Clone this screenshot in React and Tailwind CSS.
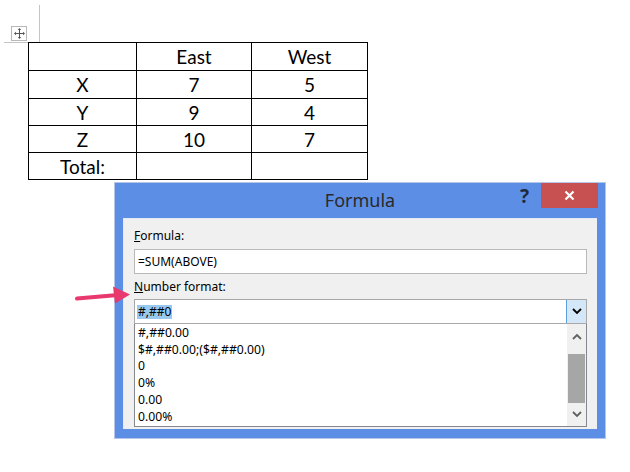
import React from "react";

// Word table + Formula dialog
const rows = [
  ["", "East", "West"],
  ["X", "7", "5"],
  ["Y", "9", "4"],
  ["Z", "10", "7"],
  ["Total:", "", ""],
];
const rowHeights = ["h-[28px]", "h-[28px]", "h-[27px]", "h-[27px]", "h-[27px]"];

const formats = ["#,##0.00", "$#,##0.00;($#,##0.00)", "0", "0%", "0.00", "0.00%"];

function Chevron({ up, className }) {
  return (
    <svg width="10" height="7" viewBox="0 0 10 7" className={className}>
      <path
        d={up ? "M1 6 L5 2 L9 6" : "M1 1 L5 5 L9 1"}
        fill="none"
        stroke="currentColor"
        strokeWidth="1.8"
      />
    </svg>
  );
}

export default function App() {
  return (
    <div className="relative w-[630px] h-[472px] bg-white overflow-hidden font-['Noto_Sans',sans-serif]">
      {/* page corner marks */}
      <div className="absolute left-[39px] top-[5px] w-px h-[37px] bg-[#c4c4c4]" />
      <div className="absolute left-[4px] top-[42px] w-[24px] h-px bg-[#c4c4c4]" />
      <div className="absolute left-[11px] top-[26px] w-[16px] h-[15px] border border-[#b8b8b8] bg-white flex items-center justify-center">
        <svg width="11" height="11" viewBox="0 0 11 11" className="text-[#555]">
          <path d="M5.5 1 V10 M1 5.5 H10" stroke="currentColor" strokeWidth="1" />
          <path d="M5.5 0 L3.8 2 H7.2 Z M5.5 11 L3.8 9 H7.2 Z M0 5.5 L2 3.8 V7.2 Z M11 5.5 L9 3.8 V7.2 Z" fill="currentColor" />
        </svg>
      </div>

      {/* table */}
      <table className="ml-[28px] mt-[42px] border-collapse font-['Lato',sans-serif] text-[19px] text-black">
        <tbody>
          {rows.map((r, i) => (
            <tr key={i} className={rowHeights[i]}>
              {r.map((c, j) => (
                <td
                  key={j}
                  className={`border border-black text-center leading-none p-0 ${
                    j === 0 ? "w-[108px]" : j === 1 ? "w-[115px]" : "w-[116px]"
                  }`}
                >
                  {c}
                </td>
              ))}
            </tr>
          ))}
        </tbody>
      </table>

      {/* dialog */}
      <div className="ml-[114px] mt-[2px] w-[492px] h-[257px] border border-[#b5c6e6] bg-[#5c8ee6] flex flex-col">
        <div className="relative h-[35px] flex items-center justify-center">
          <span className="text-[18px] text-[#2a2a2a] leading-none mb-[1px]">Formula</span>
          <span className="absolute left-[405px] top-[1px] text-[19px] font-bold text-[#1f2b3d] leading-[24px]">?</span>
          <div className="absolute left-[426px] top-0 w-[57px] h-[25px] bg-[#c75050] flex items-center justify-center">
            <svg width="11" height="11" viewBox="0 0 11 11">
              <path d="M1.5 1.5 L9.5 9.5 M9.5 1.5 L1.5 9.5" stroke="white" strokeWidth="2.2" />
            </svg>
          </div>
        </div>

        <div className="mx-[8px] h-[211px] bg-[#f0f0f0] border-t border-l border-[#e4ebf6] px-[10px] pt-[9px] text-[12px] text-black">
          <div className="leading-[16px]">
            <span className="underline">F</span>ormula:
          </div>
          <div className="mt-[5px] h-[25px] bg-white border border-[#b9b9b9] px-[3px] flex items-center leading-none">
            =SUM(ABOVE)
          </div>
          <div className="mt-[5px] leading-[16px]">
            <span className="underline">N</span>umber format:
          </div>
          <div className="mt-[4px] h-[25px] bg-white border border-[#a8a8a8] flex items-center">
            <span className="ml-[2px] px-[1px] h-[14px] bg-[#99c9ef] flex items-center leading-none">#,##0</span>
            <div className="ml-auto w-[20px] h-full bg-[#d4e7f8] border-l border-[#5a9fe0] flex items-center justify-center text-black">
              <Chevron />
            </div>
          </div>
          <div className="h-[103px] bg-white border border-t-0 border-[#828790] flex">
            <div className="flex-1 pl-[3px] pt-[1px]">
              {formats.map((f) => (
                <div key={f} className="leading-[16.7px] text-[12.2px]">
                  {f}
                </div>
              ))}
            </div>
            <div className="w-[19px] bg-[#f0f0f0] flex flex-col items-center">
              <div className="h-[25px] flex items-center justify-center text-[#606060]">
                <Chevron up />
              </div>
              <div className="w-[17px] h-[49px] bg-[#a6a6a6] mt-[5px]" />
              <div className="flex-1 flex items-center justify-center text-[#606060]">
                <Chevron />
              </div>
            </div>
          </div>
        </div>
      </div>

      {/* pink arrow */}
      <svg className="absolute left-[74px] top-[285px]" width="58" height="20" viewBox="0 0 58 20">
        <path d="M3 13.5 L44 10" stroke="#e8386e" strokeWidth="4" strokeLinecap="round" />
        <path d="M39 1.5 L56 9.5 L41 18.5 Z" fill="#e8386e" />
      </svg>
    </div>
  );
}
